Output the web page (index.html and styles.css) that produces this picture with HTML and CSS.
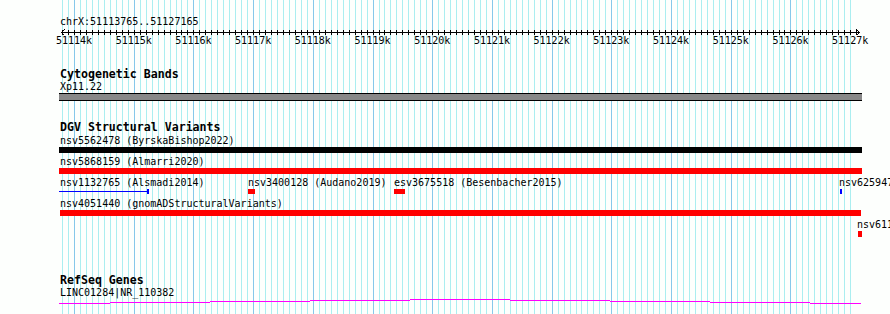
FILE: index.html
```html
<!DOCTYPE html>
<html>
<head>
<meta charset="utf-8">
<title>chrX:51113765..51127165</title>
<link rel="stylesheet" href="styles.css">
</head>
<body>
<div class="browser">
  <svg class="grid" width="861" height="314" viewBox="0 0 861 314" aria-hidden="true">
    <path class="minor" d="M62.59 0v314m5.9701-314v314m5.9701-314v314m5.9701-314v314m5.9701-314v314m5.9701-314v314m5.9701-314v314m5.9701-314v314m5.9701-314v314m5.9701-314v314m5.9701-314v314m5.9701-314v314m5.9701-314v314m5.9701-314v314m5.9701-314v314m5.9701-314v314m5.9701-314v314m5.9701-314v314m5.9701-314v314m5.9701-314v314m5.9701-314v314m5.9701-314v314m5.9701-314v314m5.9701-314v314m5.9701-314v314m5.9701-314v314m5.9701-314v314m5.9701-314v314m5.9701-314v314m5.9701-314v314m5.9701-314v314m5.9701-314v314m5.9701-314v314m5.9701-314v314m5.9701-314v314m5.9701-314v314m5.9701-314v314m5.9701-314v314m5.9701-314v314m5.9701-314v314m5.9701-314v314m5.9701-314v314m5.9701-314v314m5.9701-314v314m5.9701-314v314m5.9701-314v314m5.9701-314v314m5.9701-314v314m5.9701-314v314m5.9701-314v314m5.9701-314v314m5.9701-314v314m5.9701-314v314m5.9701-314v314m5.9701-314v314m5.9701-314v314m5.9701-314v314m5.9701-314v314m5.9701-314v314m5.9701-314v314m5.9701-314v314m5.9701-314v314m5.9701-314v314m5.9701-314v314m5.9701-314v314m5.9701-314v314m5.9701-314v314m5.9701-314v314m5.9701-314v314m5.9701-314v314m5.9701-314v314m5.9701-314v314m5.9701-314v314m5.9701-314v314m5.9701-314v314m5.9701-314v314m5.9701-314v314m5.9701-314v314m5.9701-314v314m5.9701-314v314m5.9701-314v314m5.9701-314v314m5.9701-314v314m5.9701-314v314m5.9701-314v314m5.9701-314v314m5.9701-314v314m5.9701-314v314m5.9701-314v314m5.9701-314v314m5.9701-314v314m5.9701-314v314m5.9701-314v314m5.9701-314v314m5.9701-314v314m5.9701-314v314m5.9701-314v314m5.9701-314v314m5.9701-314v314m5.9701-314v314m5.9701-314v314m5.9701-314v314m5.9701-314v314m5.9701-314v314m5.9701-314v314m5.9701-314v314m5.9701-314v314m5.9701-314v314m5.9701-314v314m5.9701-314v314m5.9701-314v314m5.9701-314v314m5.9701-314v314m5.9701-314v314m5.9701-314v314m5.9701-314v314m5.9701-314v314m5.9701-314v314m5.9701-314v314m5.9701-314v314m5.9701-314v314m5.9701-314v314m5.9701-314v314m5.9701-314v314m5.9701-314v314m5.9701-314v314m5.9701-314v314m5.9701-314v314m5.9701-314v314m5.9701-314v314m5.9701-314v314m5.9701-314v314m5.9701-314v314"/>
    <path class="major" d="M74.53 0v314m59.701-314v314m59.701-314v314m59.701-314v314m59.701-314v314m59.701-314v314m59.701-314v314m59.701-314v314m59.701-314v314m59.701-314v314m59.701-314v314m59.701-314v314m59.701-314v314"/>
  </svg>

  <div class="content">
    <div class="position">chrX:51113765..51127165</div>

    <div class="ruler">
      <svg class="axis" width="862" height="21" viewBox="0 0 862 21" aria-hidden="true">
        <path class="axis-line" d="M61 5.5H860"/>
        <path class="axis-line" d="M64.5 2.5L61.5 5.5L64.5 8.5M856.5 2.5L859.5 5.5L856.5 8.5"/>
        <path class="ticks" d="M62.59 3v5m5.9701-5v5m5.9701-5v5m5.9701-5v5m5.9701-5v5m5.9701-5v5m5.9701-5v5m5.9701-5v5m5.9701-5v5m5.9701-5v5m5.9701-5v5m5.9701-5v5m5.9701-5v5m5.9701-5v5m5.9701-5v5m5.9701-5v5m5.9701-5v5m5.9701-5v5m5.9701-5v5m5.9701-5v5m5.9701-5v5m5.9701-5v5m5.9701-5v5m5.9701-5v5m5.9701-5v5m5.9701-5v5m5.9701-5v5m5.9701-5v5m5.9701-5v5m5.9701-5v5m5.9701-5v5m5.9701-5v5m5.9701-5v5m5.9701-5v5m5.9701-5v5m5.9701-5v5m5.9701-5v5m5.9701-5v5m5.9701-5v5m5.9701-5v5m5.9701-5v5m5.9701-5v5m5.9701-5v5m5.9701-5v5m5.9701-5v5m5.9701-5v5m5.9701-5v5m5.9701-5v5m5.9701-5v5m5.9701-5v5m5.9701-5v5m5.9701-5v5m5.9701-5v5m5.9701-5v5m5.9701-5v5m5.9701-5v5m5.9701-5v5m5.9701-5v5m5.9701-5v5m5.9701-5v5m5.9701-5v5m5.9701-5v5m5.9701-5v5m5.9701-5v5m5.9701-5v5m5.9701-5v5m5.9701-5v5m5.9701-5v5m5.9701-5v5m5.9701-5v5m5.9701-5v5m5.9701-5v5m5.9701-5v5m5.9701-5v5m5.9701-5v5m5.9701-5v5m5.9701-5v5m5.9701-5v5m5.9701-5v5m5.9701-5v5m5.9701-5v5m5.9701-5v5m5.9701-5v5m5.9701-5v5m5.9701-5v5m5.9701-5v5m5.9701-5v5m5.9701-5v5m5.9701-5v5m5.9701-5v5m5.9701-5v5m5.9701-5v5m5.9701-5v5m5.9701-5v5m5.9701-5v5m5.9701-5v5m5.9701-5v5m5.9701-5v5m5.9701-5v5m5.9701-5v5m5.9701-5v5m5.9701-5v5m5.9701-5v5m5.9701-5v5m5.9701-5v5m5.9701-5v5m5.9701-5v5m5.9701-5v5m5.9701-5v5m5.9701-5v5m5.9701-5v5m5.9701-5v5m5.9701-5v5m5.9701-5v5m5.9701-5v5m5.9701-5v5m5.9701-5v5m5.9701-5v5m5.9701-5v5m5.9701-5v5m5.9701-5v5m5.9701-5v5m5.9701-5v5m5.9701-5v5m5.9701-5v5m5.9701-5v5m5.9701-5v5m5.9701-5v5m5.9701-5v5m5.9701-5v5m5.9701-5v5m5.9701-5v5m5.9701-5v5m5.9701-5v5m5.9701-5v5m5.9701-5v5m5.9701-5v5"/>
      </svg>
      <span class="tick-label" style="left:74.03px">51114k</span>
      <span class="tick-label" style="left:133.73px">51115k</span>
      <span class="tick-label" style="left:193.43px">51116k</span>
      <span class="tick-label" style="left:253.13px">51117k</span>
      <span class="tick-label" style="left:312.83px">51118k</span>
      <span class="tick-label" style="left:372.54px">51119k</span>
      <span class="tick-label" style="left:432.24px">51120k</span>
      <span class="tick-label" style="left:491.94px">51121k</span>
      <span class="tick-label" style="left:551.64px">51122k</span>
      <span class="tick-label" style="left:611.34px">51123k</span>
      <span class="tick-label" style="left:671.04px">51124k</span>
      <span class="tick-label" style="left:730.75px">51125k</span>
      <span class="tick-label" style="left:790.45px">51126k</span>
      <span class="tick-label" style="left:850.15px">51127k</span>
    </div>

    <section class="track track-cyto">
      <h2 class="track-title">Cytogenetic Bands</h2>
      <div class="label-line">Xp11.22</div>
      <div class="band"></div>
    </section>

    <section class="track track-dgv">
      <h2 class="track-title">DGV Structural Variants</h2>
      <div class="lane">
        <span class="feat-label" style="left:0px">nsv5562478 (ByrskaBishop2022)</span>
        <span class="bar bar-black" style="left:-1px;width:803px"></span>
      </div>
      <div class="lane">
        <span class="feat-label" style="left:0px">nsv5868159 (Almarri2020)</span>
        <span class="bar bar-red" style="left:-1px;width:803px"></span>
      </div>
      <div class="lane">
        <span class="feat-label" style="left:0px">nsv1132765 (Alsmadi2014)</span>
        <span class="span-line" style="left:-1px;width:90px"></span>
        <span class="bar bar-blue bar-small" style="left:87px;width:2px"></span>
        <span class="feat-label" style="left:188px">nsv3400128 (Audano2019)</span>
        <span class="bar bar-red bar-small" style="left:188px;width:7px"></span>
        <span class="feat-label" style="left:334px">esv3675518 (Besenbacher2015)</span>
        <span class="bar bar-red bar-small" style="left:334px;width:11px"></span>
        <span class="feat-label" style="left:779px">nsv625947</span>
        <span class="bar bar-blue bar-small" style="left:780px;width:2px"></span>
      </div>
      <div class="lane">
        <span class="feat-label" style="left:0px">nsv4051440 (gnomADStructuralVariants)</span>
        <span class="bar bar-red" style="left:0px;width:801px"></span>
      </div>
      <div class="lane">
        <span class="feat-label" style="left:797px">nsv611</span>
        <span class="bar bar-red" style="left:798px;width:4px"></span>
      </div>
    </section>

    <section class="track track-refseq">
      <h2 class="track-title">RefSeq Genes</h2>
      <div class="label-line">LINC01284|NR_110382</div>
      <svg class="gene" width="890" height="8" viewBox="0 298 890 8" aria-hidden="true">
        <path class="gene-line" d="M59 303.5H110M110 302.5H210M210 301.5H310M310 300.5H410M410 299.5H510M510 300.5H610M610 301.5H710M710 302.5H810M810 303.5H861"/>
      </svg>
    </section>
  </div>
</div>
</body>
</html>
```

FILE: styles.css
```css
html, body {
  margin: 0;
  padding: 0;
}

body {
  width: 890px;
  height: 314px;
  overflow: hidden;
  background: #fdfffd;
  color: #000;
  font-family: "DejaVu Sans Mono", "Liberation Mono", monospace;
  font-size: 10px;
}

.browser {
  position: relative;
  width: 890px;
  height: 314px;
  overflow: hidden;
}

.grid {
  position: absolute;
  left: 0;
  top: 0;
}

.minor,
.major,
.ticks,
.axis-line,
.gene-line {
  fill: none;
  stroke-width: 1;
  shape-rendering: crispEdges;
}

.minor { stroke: #aaeef0; }
.major { stroke: #86c8ea; }

.content {
  position: relative;
  padding-left: 60px;
}

.position {
  padding-top: 16px;
  height: 11px;
  line-height: 11px;
  white-space: nowrap;
}

.ruler {
  position: relative;
  height: 21px;
  margin-left: -60px;
}

.axis {
  display: block;
}

.axis-line,
.ticks {
  stroke: #000;
}

.tick-label {
  position: absolute;
  top: 8px;
  line-height: 11px;
  transform: translateX(-50%);
  white-space: nowrap;
}

.track-title {
  margin: 0;
  font-size: 11.6px;
  font-weight: bold;
  line-height: 13px;
  height: 13px;
  white-space: nowrap;
}

.label-line {
  line-height: 11px;
  height: 11px;
  white-space: nowrap;
}

.track-cyto {
  margin-top: 20px;
}

.band {
  margin-top: 1px;
  margin-left: -1px;
  width: 803px;
  height: 6px;
  background: #888888;
  border-top: 1px solid #000;
  border-bottom: 1px solid #000;
}

.track-dgv {
  margin-top: 20px;
}

.track-dgv .track-title {
  margin-bottom: 1px;
}

.lane {
  position: relative;
  height: 21px;
}

.feat-label {
  position: absolute;
  top: 0;
  line-height: 11px;
  white-space: nowrap;
}

.bar {
  position: absolute;
  top: 12px;
  height: 6px;
}

.bar-small {
  height: 5px;
}

.bar-black { background: #000; }
.bar-red { background: #ff0000; }
.bar-blue { background: #0000ff; }

.span-line {
  position: absolute;
  top: 14px;
  height: 1px;
  background: #0000ff;
}

.track-refseq {
  margin-top: 34px;
}

.gene {
  display: block;
  margin-left: -60px;
}

.gene-line {
  stroke: #ff00ff;
}
```
